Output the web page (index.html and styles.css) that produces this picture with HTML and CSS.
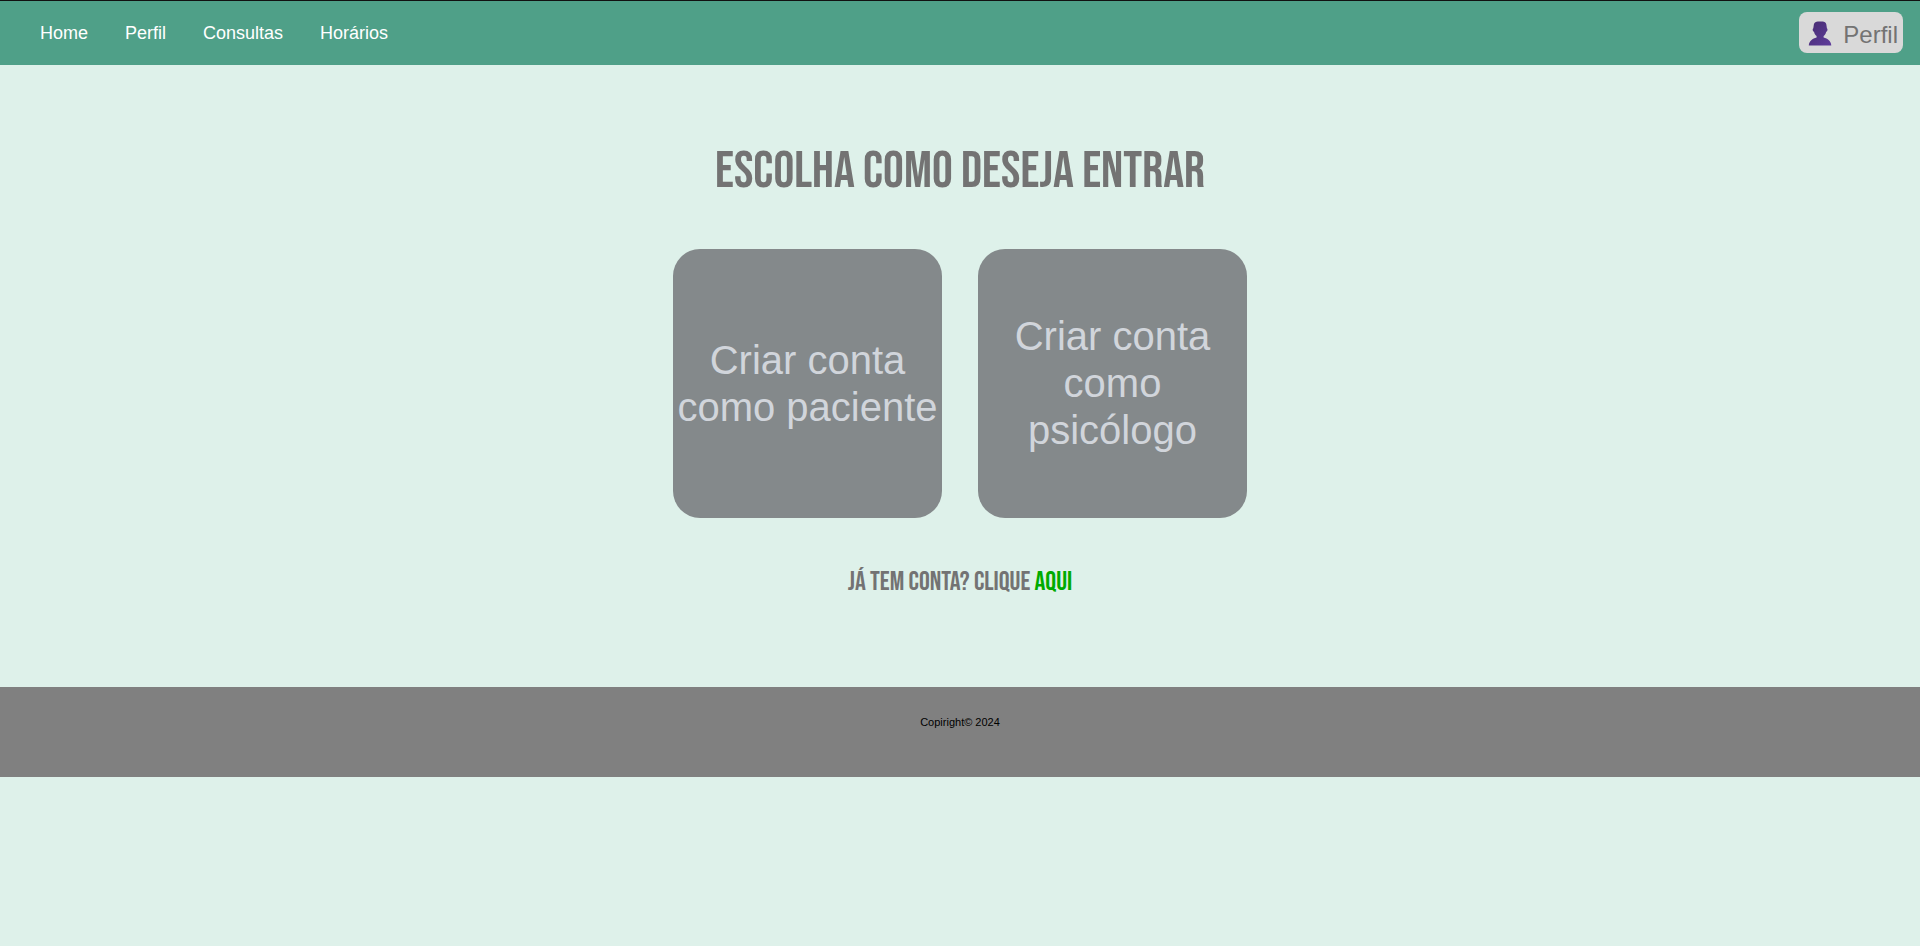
FILE: index.html
```html
<!DOCTYPE html>
<html lang="pt-BR">
<head>
<meta charset="utf-8">
<title>Escolha como deseja entrar</title>
<link rel="stylesheet" href="styles.css">
</head>
<body>
<header class="topbar">
  <nav class="menu">
    <a href="#">Home</a>
    <a href="#">Perfil</a>
    <a href="#">Consultas</a>
    <a href="#">Horários</a>
  </nav>
  <a class="profile" href="#">
    <svg class="avatar" viewBox="0 0 24 26" aria-hidden="true">
      <defs>
        <linearGradient id="bust" x1="0" y1="0" x2="1" y2="1">
          <stop offset="0" stop-color="#472c70"/>
          <stop offset="1" stop-color="#5f3d9c"/>
        </linearGradient>
      </defs>
      <path fill="url(#bust)" d="M.8 25.500C1.100 21 4.500 18.600 8.600 17.600V16C7.200 14.900 6.400 13.600 6.100 12 4.700 11.500 4.100 9 5.300 8.300L5.900 4.200C6.500 2.300 8 1.500 9.800 1.500h4.800c1.900 0 3.200.9 3.700 2.700l.6 4.100c1.200.7.6 3.200-.8 3.700-.3 1.600-1.100 2.900-2.500 4v1.600c4.100 1 7.400 3.400 7.700 7.900z"/>
    </svg>
    <span>Perfil</span>
  </a>
</header>
<main class="content">
  <h1 class="title">ESCOLHA COMO DESEJA ENTRAR</h1>
  <div class="options">
    <button class="option" type="button">Criar conta como paciente</button>
    <button class="option" type="button">Criar conta como psicólogo</button>
  </div>
  <p class="login">JÁ TEM CONTA? CLIQUE <a href="#">AQUI</a></p>
</main>
<footer class="footer">Copiright© 2024</footer>
</body>
</html>
```
FILE: styles.css
```css
* {
  box-sizing: border-box;
}

body {
  margin: 0;
  background: #def1ea;
  font-family: "Liberation Sans", Arial, sans-serif;
}

.topbar {
  display: flex;
  align-items: center;
  justify-content: space-between;
  min-height: 65px;
  padding: 0 17px 1px 40px;
  border-top: 1px solid #111;
  background: #4fa088;
}

.menu {
  display: flex;
  gap: 37px;
  font-size: 18px;
  line-height: 22px;
}

.menu a {
  color: #fff;
  text-decoration: none;
}

.profile {
  display: flex;
  align-items: center;
  gap: 11px;
  padding: 0 5px 0 9px;
  border-radius: 8px;
  background: #d9d9d9;
  color: #737373;
  font-size: 24px;
  line-height: 41px;
  text-decoration: none;
}

.profile span {
  padding-top: 4px;
  line-height: 37px;
}

.avatar {
  width: 24px;
  height: 26px;
}

.content {
  display: flex;
  flex-direction: column;
  align-items: center;
  padding: 75px 16px 89px;
  color: #737373;
  font-family: "Bebas Neue", "Roboto Condensed", "Roboto", sans-serif;
}

.title {
  margin: 0;
  font-size: 52px;
  font-weight: normal;
  line-height: 64px;
}

.options {
  display: flex;
  flex-wrap: wrap;
  justify-content: center;
  gap: 36px;
  margin: 45px 0 49px;
}

.option {
  width: 269px;
  height: 269px;
  padding: 0;
  border: 0;
  border-radius: 27px;
  background: #84898b;
  color: #d1d5db;
  font: 40px/47px "Liberation Sans", Arial, sans-serif;
}

.login {
  margin: 0;
  font-size: 27px;
  line-height: 31px;
}

.login a {
  color: #00ab00;
  text-decoration: none;
}

.footer {
  min-height: 90px;
  padding-top: 28px;
  background: #808080;
  color: #000;
  font-size: 11px;
  line-height: 14px;
  text-align: center;
}
```
